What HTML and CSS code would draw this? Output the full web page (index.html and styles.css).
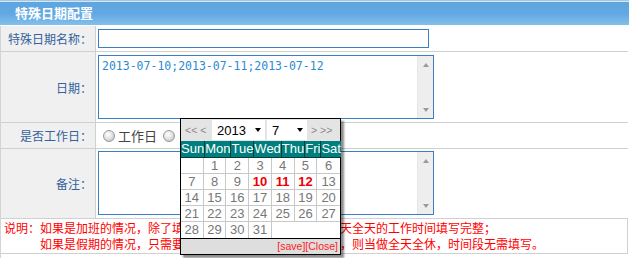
FILE: index.html
```html
<!DOCTYPE html>
<html>
<head>
<meta charset="utf-8">
<link rel="stylesheet" href="styles.css">
</head>
<body>
<div class="page">
  <div class="title-bar">特殊日期配置</div>
  <div class="form">
    <div class="row r-name">
      <div class="label">特殊日期名称：</div>
      <div class="value"><div class="input"></div></div>
    </div>
    <div class="row r-date">
      <div class="label">日期：</div>
      <div class="value">
        <div class="textbox">
          <div class="text mono">2013-07-10;2013-07-11;2013-07-12</div>
          <div class="scrollbar"><span class="arr up"></span><span class="arr down"></span></div>
        </div>
      </div>
    </div>
    <div class="row r-work">
      <div class="label">是否工作日：</div>
      <div class="value radios">
        <label class="radio"><span class="dot"></span>工作日</label>
        <label class="radio"><span class="dot"></span><span class="covered">非工作日</span></label>
      </div>
    </div>
    <div class="row r-note">
      <div class="label">备注：</div>
      <div class="value">
        <div class="textbox tb2">
          <div class="text"></div>
          <div class="scrollbar"><span class="arr up"></span><span class="arr down"></span></div>
        </div>
      </div>
    </div>
    <div class="explain">
      <span class="ex-head">说明：</span>
      <div class="ex-lines">
        <div>如果是加班的情况，除了填<span class="covered">写日期以外，还需要把加班当</span>天全天的工作时间填写完整；</div>
        <div>如果是假期的情况，只需要<span class="covered">选择好日期，并勾选非工作日</span>，则当做全天全休，时间段无需填写。</div>
      </div>
    </div>
    <div class="tail"></div>
  </div>

  <div class="calendar">
    <div class="cal-nav">
      <span class="nav prev">&lt;&lt; &lt;</span>
      <span class="sel year">2013<i class="caret"></i></span>
      <span class="sel month">7<i class="caret"></i></span>
      <span class="nav next">&gt; &gt;&gt;</span>
    </div>
    <div class="cal-head">
      <span>Sun</span><span>Mon</span><span>Tue</span><span>Wed</span><span>Thu</span><span>Fri</span><span>Sat</span>
    </div>
    <div class="cal-days">
      <span></span><span>1</span><span>2</span><span>3</span><span>4</span><span>5</span><span class="c7">6</span>
      <span>7</span><span>8</span><span>9</span><span class="sel-day">10</span><span class="sel-day">11</span><span class="sel-day">12</span><span class="c7">13</span>
      <span>14</span><span>15</span><span>16</span><span>17</span><span>18</span><span>19</span><span class="c7">20</span>
      <span>21</span><span>22</span><span>23</span><span>24</span><span>25</span><span>26</span><span class="c7">27</span>
      <span class="last">28</span><span class="last">29</span><span class="last">30</span><span class="last">31</span><span class="blank"></span>
    </div>
    <div class="cal-foot"><span>[save]</span><span>[Close]</span></div>
  </div>
</div>
</body>
</html>
```

FILE: styles.css
```css
* { box-sizing: border-box; }

body {
  margin: 0;
  background: #fff;
  font-family: "Liberation Sans", "Noto Sans CJK SC", sans-serif;
  font-size: 12px;
}

.page {
  position: relative;
  width: 629px;
  height: 258px;
  overflow: hidden;
}

.title-bar {
  height: 25px;
  border-top: 1px solid #a9c8dd;
  box-shadow: inset 0 1px 0 #d2e8f8;
  background: linear-gradient(#5ea4df, #62a9e4 55%, #83c0ec);
  color: #fff;
  font-family: "Noto Sans CJK SC", sans-serif;
  font-weight: bold;
  font-size: 13px;
  line-height: 23px;
  padding-left: 15px;
}

.form {
  margin-top: 1px;
  width: 628px;
  border-left: 1px solid #d4d4d4;
}

.row {
  display: grid;
  grid-template-columns: 95px 1fr;
  border-bottom: 1px solid #d0d0d0;
}

.label {
  background: #f0f0f0;
  border-right: 1px solid #d0d0d0;
  display: flex;
  align-items: center;
  justify-content: flex-end;
  padding-right: 3px;
  color: #33629c;
  font-family: "Noto Sans CJK SC", sans-serif;
  font-size: 12px;
}

.value {
  padding: 3px 0 3px 2px;
}

.input {
  width: 331px;
  height: 19px;
  border: 1px solid #3a80c0;
  background: #fff;
}

.textbox {
  width: 336px;
  height: 64px;
  border: 1px solid #3a80c0;
  display: flex;
  background: #fff;
}

.r-note .value { padding-top: 2px; }

.text {
  flex: 1;
  padding: 3px 0 0 3px;
}

.mono {
  font-family: "DejaVu Sans Mono", monospace;
  font-size: 11.5px;
  line-height: 14px;
  color: #2a8bd2;
}

.scrollbar {
  width: 16px;
  background: #eeeeee;
  border-left: 1px solid #e6e6e6;
  display: flex;
  flex-direction: column;
  justify-content: space-between;
  align-items: center;
  padding: 7px 0 6px;
}

.arr {
  width: 0;
  height: 0;
  border-left: 3.5px solid transparent;
  border-right: 3.5px solid transparent;
}
.arr.up { border-bottom: 4px solid #9a9a9a; }
.arr.down { border-top: 4px solid #9a9a9a; }

.radios {
  display: flex;
  align-items: center;
  padding: 0 0 0 7px;
  gap: 6px;
}

.radio {
  display: flex;
  align-items: center;
  font-family: "Noto Sans CJK SC", sans-serif;
  font-size: 13px;
  color: #444;
}

.dot {
  width: 12px;
  height: 12px;
  border-radius: 50%;
  border: 1px solid #9a9a9a;
  background: radial-gradient(circle at 40% 35%, #ffffff 0, #e4e4e4 45%, #b4b4b4 100%);
  margin-right: 3px;
}

/* text lying under the calendar popup */
.covered { visibility: hidden; }

.r-name { height: 26px; }
.r-date { height: 71px; }
.r-work { height: 26px; }
.r-note { height: 70px; }

.explain {
  display: flex;
  height: 35px;
  padding: 1px 0 0 3px;
  border-bottom: 1px solid #d0d0d0;
  border-right: 1px solid #d0d0d0;
  color: #f00;
  font-family: "Noto Sans CJK SC", sans-serif;
  font-size: 12px;
  line-height: 16px;
  white-space: nowrap;
}

.tail {
  height: 6px;
}

/* calendar popup */
.calendar {
  position: absolute;
  left: 180px;
  top: 118px;
  width: 161px;
  height: 137px;
  border: 1px solid #000;
  background: #fff;
  box-shadow: 3px 3px 2px rgba(0, 0, 0, 0.45);
  font-family: "Liberation Sans", sans-serif;
}

.cal-nav {
  height: 22px;
  background: #e4e4e4;
  display: flex;
  align-items: center;
}

.nav {
  color: #8a8a8a;
  font-size: 10.5px;
  white-space: nowrap;
}
.nav.prev { width: 31px; padding-left: 4px; }
.nav.next { width: 32px; padding-left: 4px; }

.sel {
  height: 20px;
  background: #fff;
  display: flex;
  align-items: center;
  padding-left: 5px;
  color: #000;
  font-size: 13px;
}
.sel.year { width: 53px; }
.sel.month { width: 40px; margin-left: 2px; }

.caret {
  margin-left: auto;
  margin-right: 4px;
  width: 0;
  height: 0;
  border-left: 3.5px solid transparent;
  border-right: 3.5px solid transparent;
  border-top: 4px solid #000;
}

.cal-head {
  display: flex;
  gap: 1px;
  background: #053a3a;
  border-bottom: 1px solid #053a3a;
}
.cal-head span {
  flex: 1 1 auto;
  background: #007f7f;
  color: #fff;
  font-size: 13px;
  line-height: 16px;
  text-align: center;
}

.cal-days {
  display: grid;
  grid-template-columns: repeat(7, 1fr);
  grid-auto-rows: 16px;
}
.cal-days span {
  border-right: 1px solid #c8c8c8;
  border-bottom: 1px solid #c8c8c8;
  color: #777;
  font-size: 13px;
  line-height: 15px;
  text-align: center;
}
.cal-days span.c7 { border-right: none; }
.cal-days span.last { border-bottom: none; }
.cal-days span.blank {
  grid-column: span 3;
  border: none;
}
.cal-days span.sel-day {
  color: #e00;
  font-weight: bold;
}

.cal-foot {
  height: 16px;
  border-top: 1px solid #000;
  background: #dedede;
  text-align: right;
  padding-right: 2px;
  color: #f22;
  font-size: 10.5px;
  line-height: 15px;
}
```
